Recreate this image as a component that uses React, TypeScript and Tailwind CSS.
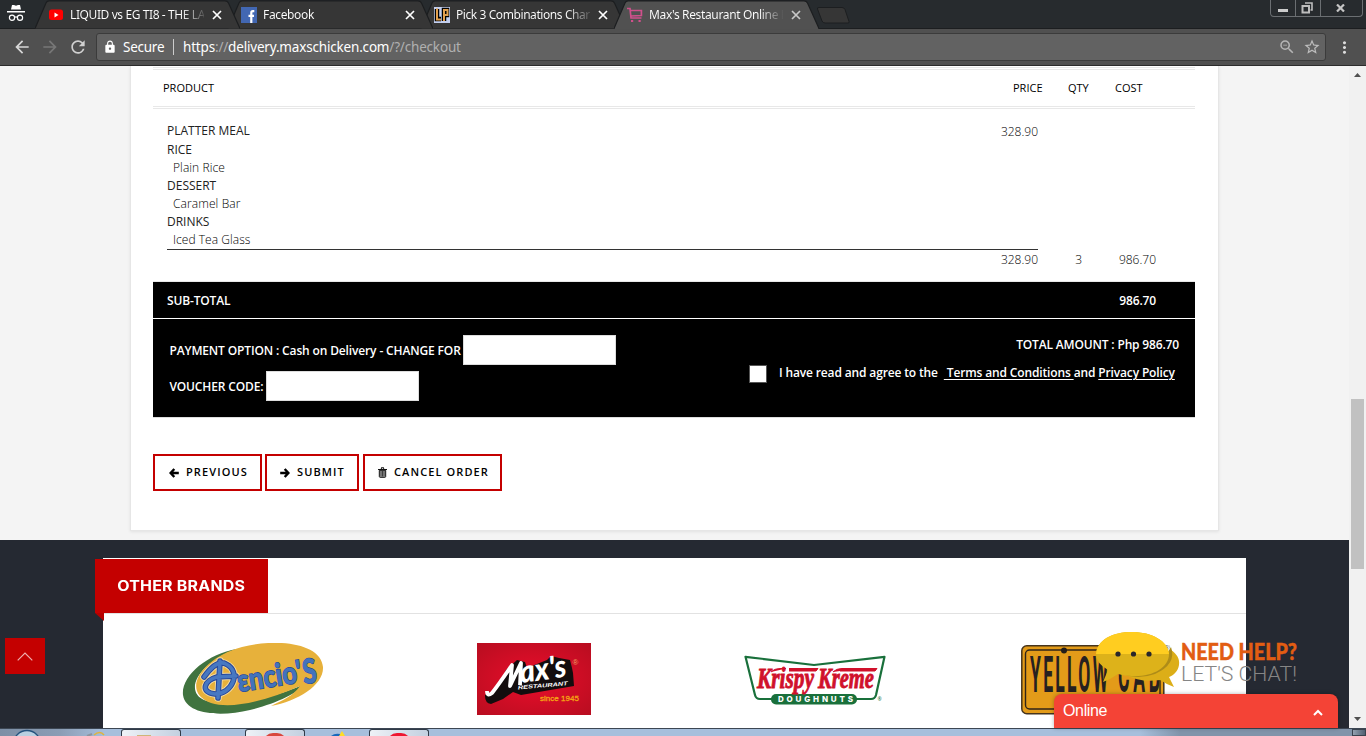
import React from "react";
import { MdLock, MdStarBorder, MdZoomOut, MdRefresh, MdArrowBack, MdArrowForward, MdMoreVert } from "react-icons/md";

const UI = "font-['Noto_Sans','Open_Sans',sans-serif]";

function Tab({ icon, title, track, z, active }: { icon: React.ReactNode; title: string; track: string; z: string; active?: boolean }) {
  return (
    <div className={`relative -mr-3 h-[29px] w-[205px] shrink-0 ${z}`}>
      <svg className="absolute inset-0" width="205" height="29" viewBox="0 0 205 29">
        <path d="M0 28.5 L11 3 Q12 .9 14 .9 H190 Q192.500 .9 193.500 3 L205 28.500" fill={active ? "#515151" : "#363636"} stroke="#1c1e20" strokeWidth="1.2" />
        {active && <path d="M1 28.500H204" stroke="#515151" />}
      </svg>
      <div className="relative flex h-[29px] items-center pl-[13px]">
        <span className="flex w-[22px] items-center">{icon}</span>
        <span
          className={`w-[134px] overflow-hidden whitespace-nowrap bg-clip-text text-[12px] leading-4 text-transparent ${track} ${UI} bg-[linear-gradient(90deg,#fff_82%,#555_100%)]`}
        >
          {title}
        </span>
        <svg className="ml-[8px]" width="10" height="10" viewBox="0 0 10 10" stroke={active ? "#c8c8c8" : "#fff"} strokeWidth="1.7">
          <path d="M1 1l8 8M9 1l-8 8" />
        </svg>
      </div>
    </div>
  );
}

function Incognito() {
  return (
    <svg width="18" height="18" viewBox="0 0 18 18" fill="#fff">
      <path d="M5 0h2l2 .8L11 0h2l1 4.500H4z" />
      <rect x="0" y="6" width="18" height="1.500" />
      <g fill="none" stroke="#fff" strokeWidth="1.200">
        <circle cx="5" cy="12.700" r="2.600" />
        <circle cx="13" cy="12.700" r="2.600" />
        <path d="M7.600 12.300q1.400-.9 2.800 0" />
      </g>
    </svg>
  );
}

function Chrome() {
  return (
    <header className="h-[66px] bg-[#272b2e]">
      <div className="flex h-[29px] border-b border-[#1c1e20]">
        <div className="w-[35px] shrink-0 pl-[7px] pt-[5px]"><Incognito /></div>
        <Tab z="z-30" track="tracking-[-0.4px]" title="LIQUID vs EG TI8 - THE LAST" icon={
          <svg className="ml-px" width="14" height="12" viewBox="0 0 14 12"><rect y=".5" width="14" height="10.500" rx="2.500" fill="#f00" /><path d="M5.500 3.500v5l4-2.500z" fill="#fff" /></svg>
        } />
        <Tab z="z-20" track="tracking-[-0.35px]" title="Facebook" icon={
          <svg width="16" height="16" viewBox="0 0 16 16"><path fill="#4267b2" d="M0 0h16v16H0z" /><path d="M13.300 4.200h-1.500q-1.500 0-1.500 1.600V16M7.500 8.900h5.500" stroke="#fff" strokeWidth="2.200" fill="none" /></svg>
        } />
        <Tab z="z-10" track="tracking-[-0.42px]" title="Pick 3 Combinations Chart" icon={
          <svg width="16" height="16" viewBox="0 0 16 16"><path fill="#c3cfef" d="M0 0h16v16H0z" /><g fill="none" stroke="#000" strokeWidth="4.500"><path d="M3 2v10h4M10 14V3h3v5h-3" /></g><g fill="none" stroke="#e2a04f" strokeWidth="2"><path d="M3 1.500v11h4M10 14V3h3.500v5H10" /></g></svg>
        } />
        <Tab active z="z-40" track="tracking-[-0.35px]" title="Max's Restaurant Online D" icon={
          <svg width="16" height="16" viewBox="0 0 16 16" fill="none" stroke="#d0508c" strokeWidth="1.700"><path d="M0 1.500h3l1 9.500h10.500M3.400 3.500h11v5L4 9" /><path d="M4 14h2.200M11.500 14h2.200" strokeWidth="2" /></svg>
        } />
        <svg className="ml-[9px] mt-[7px]" width="34" height="17" viewBox="0 0 34 17"><path d="M3 .5h23q2 0 3 2l4 12q.5 1.500-1 1.500H9q-2 0-3-2L1.500 2Q1 .5 3 .5z" fill="#363636" stroke="#1c1e20" /></svg>
        <div className="mr-[3px] ml-auto flex h-[17px] w-[93px] rounded-b border border-t-0 border-[#6b6f72]">
          <div className="flex w-[25px] items-center justify-center border-r border-[#6b6f72] pr-px"><span className="mt-[4px] h-[3px] w-[10px] bg-[#ccc]" /></div>
          <div className="flex w-[25px] items-center justify-center border-r border-[#6b6f72] pr-[2px]">
            <svg width="12" height="12" viewBox="0 0 12 12" fill="none" stroke="#bdbdbd" strokeWidth="2"><path d="M4 1h7v7H9.500" strokeWidth="1.600" /><path d="M1.500 4h6.500v6.500H1.500z" /></svg>
          </div>
          <div className="flex flex-1 items-center justify-center pr-[2px]">
            <svg width="9" height="8" viewBox="0 0 9 8"><path d="M1 .5l7 7M8 .5l-7 7" stroke="#c5c5c5" strokeWidth="2.200" /></svg>
          </div>
        </div>
      </div>
      <div className="flex h-[37px] items-center border-b border-[#2c2c2c] bg-[#505050] pl-[12px]">
        <MdArrowBack className="h-5 w-5 text-[#d8d8d8]" />
        <MdArrowForward className="ml-2 h-5 w-5 text-[#777]" />
        <MdRefresh className="ml-2 h-5 w-5 text-[#d0d0d0]" />
        <div className={`ml-[8px] flex h-[28px] w-[1230px] items-center rounded-[3px] border border-[#3b3b3b] bg-[#626262] pl-[6px] text-white ${UI}`}>
          <MdLock className="h-[14px] w-[14px]" />
          <span className="ml-[6px] w-[50px] whitespace-nowrap text-[13.5px] tracking-[-0.25px]">Secure</span>
          <span className="h-[16px] w-px bg-[#ccc]" />
          <span className="ml-[9px] whitespace-nowrap text-[13.5px] tracking-[-0.18px]">https<span className="text-[#b0b0b0]">://</span>delivery.maxschicken.com<span className="text-[#b0b0b0]">/?/checkout</span></span>
          <MdZoomOut className="mr-[7px] ml-auto h-[18px] w-[18px] text-[#b5b5b5]" />
          <MdStarBorder className="mr-[4px] h-[18px] w-[18px] text-[#bdbdbd]" />
        </div>
        <MdMoreVert className="ml-[9px] h-[19px] w-[19px] text-[#ddd]" />
      </div>
    </header>
  );
}

function Btn({ w, icon, children }: { w: string; icon: React.ReactNode; children: React.ReactNode }) {
  return (
    <button className={`flex h-[37px] items-center border-2 border-[#c40000] text-[11px] font-semibold tracking-[1.1px] text-black ${w}`}>
      <span className="flex w-[17px]">{icon}</span>
      <span className="whitespace-nowrap">{children}</span>
    </button>
  );
}

function Arrow({ flip }: { flip?: boolean }) {
  return (
    <svg className={flip ? "rotate-180" : ""} width="10" height="10" viewBox="0 0 10 10" fill="none" stroke="#000" strokeWidth="2.400"><path d="M5.300 1L1.600 5l3.700 4M1.500 5H9.800" /></svg>
  );
}

function Trash() {
  return (
    <svg className="ml-px" width="9" height="11" viewBox="0 0 9 11"><path d="M0 2h9v1H0zM2.700 2l.5-1.700h2.600L6.300 2h-1l-.3-.8H4L3.700 2z" fill="#111" /><path d="M1.300 3.300h6.400v6.200q0 .8-.8.800H2.100q-.8 0-.8-.8z" fill="#aaa" stroke="#111" /><path d="M3 4v5.500M4.500 4v5.500M6 4v5.500" stroke="#222" strokeWidth=".8" /></svg>
  );
}

function Order() {
  return (
    <section className="ml-[130px] h-[465px] w-[1089px] border border-t-0 border-[#e6e6e6] bg-white px-[22px] pt-px font-['Open_Sans',sans-serif] text-[12px] text-[#222] shadow-[0_1px_3px_rgba(0,0,0,0.08)]">
      <div className="flex h-[42px] w-[1042px] items-center border-y-[3px] border-double border-[#e8e8e8] text-[11px] text-black">
        <span className="w-[850px] pl-[10px] pt-px">PRODUCT</span>
        <span className="w-[55px] pl-[10px] pt-px">PRICE</span>
        <span className="w-[47px] pl-[10px] pt-px">QTY</span>
        <span className="pl-[10px] pt-px">COST</span>
      </div>
      <div className="ml-[14px] mt-[13px] flex w-[871px] justify-between border-b border-[#333]">
        <ul className="h-[127px] leading-[18px]">
          <li className="h-[19px]">PLATTER MEAL</li>
          <li>RICE</li>
          <li className="pl-[6px] font-light tracking-[0.08px] text-black">Plain Rice</li>
          <li>DESSERT</li>
          <li className="pl-[6px] font-light tracking-[0.1px] text-black">Caramel Bar</li>
          <li>DRINKS</li>
          <li className="pl-[6px] font-light tracking-[0.04px] text-black">Iced Tea Glass</li>
        </ul>
        <span className="pt-px font-light leading-[18px] text-black">328.90</span>
      </div>
      <div className="flex h-[32px] w-[1042px] border-b border-[#e8e8e8] font-light leading-[20px] text-black">
        <span className="w-[885px] text-right">328.90</span>
        <span className="w-[44px] text-right">3</span>
        <span className="w-[74px] text-right">986.70</span>
      </div>
      <div className="w-[1042px] border-b border-[#ddd] bg-black font-semibold text-white">
        <div className="flex h-[37px] items-center justify-between border-b border-white pt-px pr-[39px] pl-[14px] tracking-[-0.15px]"><span>SUB-TOTAL</span><span>986.70</span></div>
        <div className="flex h-[98px] justify-between pt-[16px] pl-[16px]">
          <div className="flex flex-col gap-[6px] tracking-[-0.14px]">
            <label className="flex items-center whitespace-nowrap"><span className="w-[294px] pt-px pl-[0.4px]">PAYMENT OPTION : Cash on Delivery - CHANGE FOR</span><input className="h-[30px] w-[153px] border border-[#ddd] bg-white" /></label>
            <label className="flex items-center whitespace-nowrap"><span className="w-[97px] pt-px pl-[0.4px]">VOUCHER CODE:</span><input className="h-[30px] w-[153px] border border-[#ddd] bg-white" /></label>
          </div>
          <div className="flex flex-col">
            <div className="pr-[16px] text-right leading-5 tracking-[-0.16px]">TOTAL AMOUNT : Php 986.70</div>
            <div className="mt-[8px] flex h-[20px] w-[446px] items-center whitespace-pre tracking-[-0.142px]">
              <span className="mt-px mr-[12px] h-[18px] w-[18px] border border-[#555] bg-white" />
              <span>I have read and agree to the  <u className="underline-offset-2"> Terms and Conditions </u>and <u className="underline-offset-2">Privacy Policy</u></span>
            </div>
          </div>
        </div>
      </div>
      <div className="mt-[36px] flex">
        <Btn w="mr-[3px] w-[109px] pl-[14px]" icon={<Arrow />}>PREVIOUS</Btn>
        <Btn w="mr-[4px] w-[94px] pl-[13px]" icon={<Arrow flip />}>SUBMIT</Btn>
        <Btn w="w-[139px] pl-[12px]" icon={<Trash />}>CANCEL ORDER</Btn>
      </div>
    </section>
  );
}

function Dencios() {
  return (
    <svg width="142" height="73" viewBox="0 0 142 73">
      <path d="M55 6C25 11-1 33 1 52c3 20 38 22 67 15 25-6 48-17 57-27C100 52 48 67 22 57 2 48 16 20 55 6z" fill="#40733f" />
      <path d="M60 4C95-5 139 0 141 24c1 18-25 34-52 39 12-6 22-10 29-20C88 56 52 67 29 60-2 49 19 15 60 4z" fill="#e7b13b" />
      <g fontFamily="Lato" fontWeight="900" fill="#4273bc">
        <g fill="none" strokeLinecap="round">
          <path d="M38 18L36 55M22 34Q35 16 44 21C60 29 50 51 33 51C17 49 23 37 35 34L54 33" stroke="#f4dca0" strokeWidth="7.500" />
          <path d="M38 18L36 55M22 34Q35 16 44 21C60 29 50 51 33 51C17 49 23 37 35 34L54 33" stroke="#27479a" strokeWidth="5.600" />
          <path d="M38 18L36 55M22 34Q35 16 44 21C60 29 50 51 33 51C17 49 23 37 35 34L54 33" stroke="#4778c2" strokeWidth="3.600" />
        </g>
        <g stroke="#27479a" strokeWidth="1.200" paintOrder="stroke">
          <text transform="translate(57 49) rotate(-9) scale(1 1.150)" fontSize="27" textLength="65" lengthAdjust="spacingAndGlyphs">εncio'</text>
          <text transform="translate(122 41) rotate(-7)" fontSize="34" textLength="14" lengthAdjust="spacingAndGlyphs">S</text>
        </g>
      </g>
    </svg>
  );
}

function Maxs() {
  return (
    <svg width="114" height="72" viewBox="0 0 114 72">
      <defs><radialGradient id="mx" r="0.7"><stop offset="0" stopColor="#ea0d2b" /><stop offset="1" stopColor="#b80d20" /></radialGradient></defs>
      <path fill="url(#mx)" d="M0 0h114v72H0z" />
      <path d="M8 52L20 46 29 27 40 17l8 2 2 6 20-8 4-4 8 2 11 2 2 8 1 5 1 13-53 9-8-3-10 7-12 5q-6-1-6-8z" fill="#130d0e" />
      <path d="M10 48Q10 54 15 50 20 44 35 22L33 43 44 20 43 42" fill="none" stroke="#fff" strokeWidth="3.800" strokeLinejoin="round" />
      <text transform="translate(44 40) rotate(-8)" fontFamily="Lato" fontWeight="900" fontStyle="italic" fontSize="31" fill="#fff" textLength="47" lengthAdjust="spacingAndGlyphs">ax's</text>
      <text transform="translate(41 46.500) rotate(-5)" fontFamily="Liberation Sans" fontWeight="700" fontStyle="italic" fontSize="5.500" fill="#fff" textLength="50" lengthAdjust="spacingAndGlyphs">RESTAURANT</text>
      <text x="63" y="58" fontFamily="Liberation Sans" fontSize="8" fill="#f5a313" stroke="#f5a313" strokeWidth=".3" textLength="39">since 1945</text>
      <text x="95.500" y="21.500" fontFamily="Liberation Sans" fontSize="8" fill="#f0a060">®</text>
    </svg>
  );
}

function Krispy() {
  return (
    <svg width="144" height="52" viewBox="0 0 144 52">
      <path d="M1.500 1.800L70 10 140.500 1.800 132 40q-1 4-5 4H16q-4 0-5-4z" fill="#fff" stroke="#19703b" strokeWidth="2.200" strokeLinejoin="round" />
      <rect x="27" y="39" width="86" height="10.500" rx="5" fill="#19703b" />
      <text x="34" y="47.300" fontFamily="Inter" fontWeight="800" fontSize="8" fill="#fff" textLength="75">DOUGHNUTS</text>
      <g fill="#d0112b" fontFamily="Liberation Serif" fontWeight="700" fontStyle="italic" stroke="#d0112b" strokeWidth=".9">
        <text x="13" y="33" fontSize="29" textLength="57" lengthAdjust="spacingAndGlyphs">Krispy</text>
        <text x="74" y="33" fontSize="29" textLength="56" lengthAdjust="spacingAndGlyphs">Kreme</text>
      </g>
      <path d="M27 17q3-3.500 9-3.500h6M45 13.500h29l-2 2.500H45M89 17q3-3.500 9-3.500h35l-2 2.500H96" fill="#d0112b" stroke="#d0112b" />
      <text x="133.500" y="46" fontSize="5" fill="#19703b">®</text>
    </svg>
  );
}

function YellowCab() {
  return (
    <svg width="150" height="70" viewBox="0 0 150 70">
      <rect x=".8" y=".8" width="142" height="68" rx="5" fill="#e39b19" stroke="#46341d" strokeWidth="1.500" />
      <rect x="4.500" y="5" width="134.500" height="59" rx="4" fill="none" stroke="#302519" strokeWidth="1.400" />
      <circle cx="43" cy="5.500" r="3" fill="#241e1a" />
      <g fontFamily="Roboto" fontSize="17.500" fontWeight="700" fill="#262120">
        <text transform="translate(9 47) scale(1 2.900)" textLength="78">YELLOW</text>
        <text transform="translate(97 47) scale(1 2.900)" textLength="42">CAB</text>
      </g>
      <text x="143" y="5" fontSize="8" fontFamily="Liberation Sans" fill="#555">®</text>
    </svg>
  );
}

function Brands() {
  return (
    <section className="mt-[9px] h-[188px] bg-[#252932] pt-[18px]">
      <div className="ml-[103px] h-[170px] w-[1143px] bg-white">
        <div className="relative flex h-[56px] border-b border-[#e2e2e2] pt-px">
          <h2 className="-ml-2 flex h-[54px] w-[173px] items-center justify-center bg-[#c40000] pb-[2px] font-['Inter',sans-serif] text-[14px] font-bold whitespace-nowrap text-white">
            <span className="scale-x-[1.14] tracking-[0.2px]">OTHER BRANDS</span>
          </h2>
          <svg className="absolute top-[55px] -left-2" width="9" height="8"><path d="M0 0h9v8z" fill="#b50000" /></svg>
        </div>
        <div className="flex items-start pt-[29px] pl-[79px]">
          <div className="w-[295px]"><Dencios /></div>
          <div className="w-[267px]"><Maxs /></div>
          <div className="w-[277px] pt-[12px]"><Krispy /></div>
          <div className="pt-[2px]"><YellowCab /></div>
        </div>
      </div>
    </section>
  );
}

function Chat() {
  return (
    <aside className="absolute right-[28px] bottom-[8px] z-10 w-[284px]">
      <div className="h-[66px] pl-[41px]">
        <svg width="215" height="66" viewBox="0 0 215 66">
          <path d="M24 41C60 42 76 30 76 22c6 4 9 9 8 15-1 6-5 10-10 12l5 10q-8-3-14-7-19 3-34-5z" fill="#dcae18" />
          <path d="M20 39Q62 46 76 19q6 17-16 27-17 6-33 0z" fill="#ae8c18" />
          <path d="M1 26C2 12 17 4 37 4s36 9 37 22c0 14-17 23-37 22q-8 0-14-2-7 5-15 8l5-12Q1 35 1 26z" fill="#ddb21a" />
          <path d="M1 26C2 12 17 4 37 4s36 9 37 22z" fill="#ffcd20" />
          <g fill="#28272b"><circle cx="23" cy="26" r="2.600" /><circle cx="38.500" cy="26" r="2.600" /><circle cx="54" cy="26" r="2.600" /></g>
          <text x="86" y="32" fontFamily="Lato" fontWeight="900" fontSize="22" fill="#e25d12" stroke="#e25d12" strokeWidth=".4" textLength="116" lengthAdjust="spacingAndGlyphs">NEED HELP?</text>
          <text x="86" y="53" fontFamily="Roboto" fontWeight="300" fontSize="21" fill="#858585" textLength="116" lengthAdjust="spacingAndGlyphs">LET'S CHAT!</text>
        </svg>
      </div>
      <div className="flex h-[34px] items-center justify-between rounded-t-[8px] bg-[#f44336] pr-[15px] pl-[9px] font-['Liberation_Sans',sans-serif] text-[16px] tracking-[-0.35px] text-white shadow-[0_0_4px_rgba(0,0,0,0.3)]">
        Online
        <svg className="mt-[3px]" width="10" height="7" viewBox="0 0 10 7" fill="none" stroke="#fff" strokeWidth="2"><path d="M1 6l4-4 4 4" /></svg>
      </div>
    </aside>
  );
}

function Taskbar() {
  const item = "h-[7px] w-[60px] rounded-t-[3px] border border-b-0 border-[#303b48] bg-linear-to-r from-[#eef2f7] to-[#c3d0e0] flex justify-center overflow-hidden";
  return (
    <footer className="flex h-[8px] items-start overflow-hidden border-t border-[#3c4653] bg-[linear-gradient(90deg,#7d8fa6_0,#8b9db5_60px,#a7bfdc_105px,#a7bfdc_1140px,#8194aa_1180px,#8194aa_100%)]">
      <svg width="121" height="7" viewBox="0 0 121 7"><circle cx="27" cy="15" r="13.500" fill="#b9d0e1" stroke="#24527d" strokeWidth="1.300" /><path d="M87 7l5-2" stroke="#8d95a0" strokeWidth="2" /><path d="M94 6q6-5 10 0" stroke="#e0b43c" strokeWidth="1.600" fill="none" /></svg>
      <div className={item}><span className="mt-[5px] mr-[14px] h-[2px] w-[14px] bg-[#cfb578]" /></div>
      <div className="w-[64px]" />
      <div className={item}><span className="mt-[3px] h-[20px] w-[24px] shrink-0 rounded-full bg-[#d8473d]" /></div>
      <div className="w-[64px]"><svg width="64" height="7"><path d="M26 7q5-4 12-1v1z" fill="#1768bc" /><path d="M34 7l3-5 3 5z" fill="#ffdd24" /></svg></div>
      <div className={item}><span className="mt-[3px] h-[20px] w-[24px] shrink-0 rounded-full bg-[#ee1630]" /></div>
      <div className="ml-auto h-[7px] w-[14px] border border-[#39434e] bg-linear-to-r from-[#93a1b0] to-[#526173]" />
    </footer>
  );
}

export default function App() {
  return (
    <div className="relative h-[736px] w-[1366px] overflow-hidden">
      <Chrome />
      <div className="flex h-[662px]">
        <main className="relative w-[1349px] bg-[#f4f4f4]">
          <Order />
          <Brands />
          <button className="absolute top-[572px] left-[5px] flex h-[36px] w-[40px] items-center justify-center bg-[#c40000]">
            <svg width="16" height="9" viewBox="0 0 16 9" fill="none" stroke="#efb0b0" strokeWidth="1.200"><path d="M.7 8.300L8 1l7.300 7.300" /></svg>
          </button>
        </main>
        <div className="flex w-[17px] flex-col items-center bg-[#f1f1f1]">
          <svg className="mt-[7px]" width="7" height="4"><path d="M0 4l3.500-4L7 4z" fill="#505050" /></svg>
          <div className="mt-[322px] h-[170px] w-[13px] bg-[#c1c1c1]" />
          <svg className="mt-auto mb-[7px]" width="7" height="4"><path d="M0 0l3.500 4L7 0z" fill="#505050" /></svg>
        </div>
      </div>
      <Taskbar />
      <Chat />
    </div>
  );
}
